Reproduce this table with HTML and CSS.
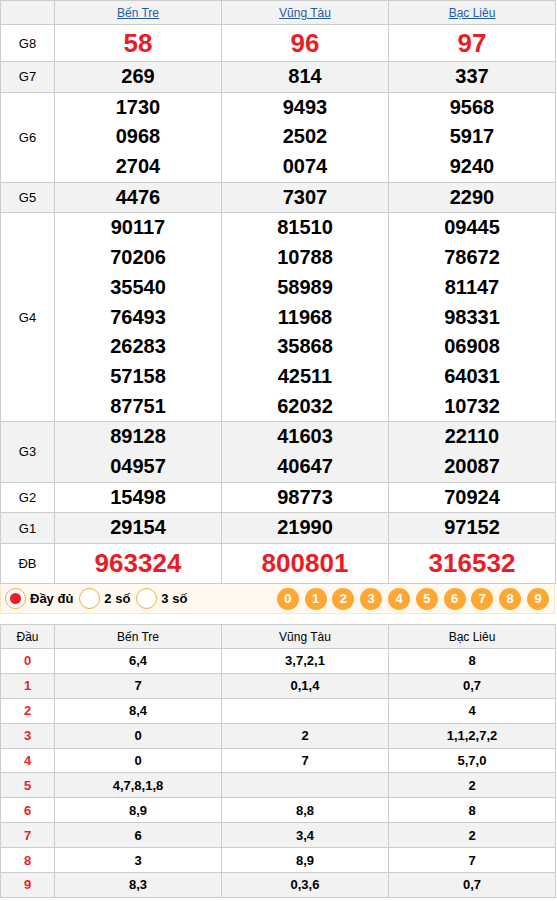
FILE: index.html
```html
<!DOCTYPE html>
<html lang="vi">
<head>
<meta charset="utf-8">
<title>XSMN</title>
<link rel="stylesheet" href="styles.css">
</head>
<body>
<table class="kq">
  <colgroup><col class="c-lbl"><col class="c-p"><col class="c-p"><col class="c-p"></colgroup>
  <tr class="hdr gray">
    <th></th>
    <th><a href="#">Bến Tre</a></th>
    <th><a href="#">Vũng Tàu</a></th>
    <th><a href="#">Bạc Liêu</a></th>
  </tr>
  <tr class="r-g8">
    <td class="lbl">G8</td>
    <td class="big red">58</td><td class="big red">96</td><td class="big red">97</td>
  </tr>
  <tr class="gray">
    <td class="lbl">G7</td>
    <td class="num"><div>269</div></td><td class="num"><div>814</div></td><td class="num"><div>337</div></td>
  </tr>
  <tr>
    <td class="lbl">G6</td>
    <td class="num"><div>1730</div><div>0968</div><div>2704</div></td>
    <td class="num"><div>9493</div><div>2502</div><div>0074</div></td>
    <td class="num"><div>9568</div><div>5917</div><div>9240</div></td>
  </tr>
  <tr class="gray">
    <td class="lbl">G5</td>
    <td class="num"><div>4476</div></td><td class="num"><div>7307</div></td><td class="num"><div>2290</div></td>
  </tr>
  <tr>
    <td class="lbl">G4</td>
    <td class="num"><div>90117</div><div>70206</div><div>35540</div><div>76493</div><div>26283</div><div>57158</div><div>87751</div></td>
    <td class="num"><div>81510</div><div>10788</div><div>58989</div><div>11968</div><div>35868</div><div>42511</div><div>62032</div></td>
    <td class="num"><div>09445</div><div>78672</div><div>81147</div><div>98331</div><div>06908</div><div>64031</div><div>10732</div></td>
  </tr>
  <tr class="gray">
    <td class="lbl">G3</td>
    <td class="num"><div>89128</div><div>04957</div></td>
    <td class="num"><div>41603</div><div>40647</div></td>
    <td class="num"><div>22110</div><div>20087</div></td>
  </tr>
  <tr>
    <td class="lbl">G2</td>
    <td class="num"><div>15498</div></td><td class="num"><div>98773</div></td><td class="num"><div>70924</div></td>
  </tr>
  <tr class="gray">
    <td class="lbl">G1</td>
    <td class="num"><div>29154</div></td><td class="num"><div>21990</div></td><td class="num"><div>97152</div></td>
  </tr>
  <tr class="r-db">
    <td class="lbl">ĐB</td>
    <td class="big red">963324</td><td class="big red">800801</td><td class="big red">316532</td>
  </tr>
</table>

<div class="ctrl">
  <div class="radios">
    <label class="radio"><span class="dot on"></span>Đầy đủ</label>
    <label class="radio"><span class="dot"></span>2 số</label>
    <label class="radio"><span class="dot"></span>3 số</label>
  </div>
  <div class="balls">
    <span class="ball">0</span><span class="ball">1</span><span class="ball">2</span><span class="ball">3</span><span class="ball">4</span><span class="ball">5</span><span class="ball">6</span><span class="ball">7</span><span class="ball">8</span><span class="ball">9</span>
  </div>
</div>

<table class="lt">
  <colgroup><col class="c-lbl"><col class="c-p"><col class="c-p"><col class="c-p"></colgroup>
  <tr class="gray lth"><th>Đầu</th><th>Bến Tre</th><th>Vũng Tàu</th><th>Bạc Liêu</th></tr>
  <tr><td class="d">0</td><td>6,4</td><td>3,7,2,1</td><td>8</td></tr>
  <tr class="gray"><td class="d">1</td><td>7</td><td>0,1,4</td><td>0,7</td></tr>
  <tr><td class="d">2</td><td>8,4</td><td></td><td>4</td></tr>
  <tr class="gray"><td class="d">3</td><td>0</td><td>2</td><td>1,1,2,7,2</td></tr>
  <tr><td class="d">4</td><td>0</td><td>7</td><td>5,7,0</td></tr>
  <tr class="gray"><td class="d">5</td><td>4,7,8,1,8</td><td></td><td>2</td></tr>
  <tr><td class="d">6</td><td>8,9</td><td>8,8</td><td>8</td></tr>
  <tr class="gray"><td class="d">7</td><td>6</td><td>3,4</td><td>2</td></tr>
  <tr><td class="d">8</td><td>3</td><td>8,9</td><td>7</td></tr>
  <tr class="gray"><td class="d">9</td><td>8,3</td><td>0,3,6</td><td>0,7</td></tr>
</table>
</body>
</html>
```

FILE: styles.css
```css
html, body {
  margin: 0;
  padding: 0;
  background: #fff;
  font-family: "Liberation Sans", Arial, sans-serif;
  color: #000;
}

table {
  border-collapse: collapse;
  table-layout: fixed;
  width: 555px;
}

.c-lbl { width: 54px; }
.c-p { width: 167px; }

td, th {
  border: 1px solid #cccccc;
  padding: 0;
  text-align: center;
  vertical-align: middle;
}

.gray td, .gray th { background: #f2f2f2; }

.kq .hdr th {
  height: 23px;
  font-size: 12px;
  font-weight: normal;
}
.kq .hdr a {
  color: #1f5ca6;
  text-decoration: underline;
}

.lbl {
  font-size: 13px;
}

.num {
  font-size: 20px;
  font-weight: bold;
}
.num div {
  height: 29.7px;
  line-height: 29.7px;
}

.big {
  font-size: 26px;
  font-weight: bold;
}
.r-g8 td { height: 36px; }
.r-db td { height: 39px; }
.red { color: #ec1c27; }

.ctrl {
  display: flex;
  align-items: center;
  justify-content: space-between;
  height: 29px;
  width: 553px;
  background: #fff9f0;
  border: 1px solid #fde6c8;
  border-top: none;
}

.radios {
  display: flex;
  align-items: center;
  padding-left: 4px;
}
.radio {
  display: flex;
  align-items: center;
  font-size: 13px;
  font-weight: bold;
  margin-right: 6px;
}
.dot {
  box-sizing: border-box;
  width: 21px;
  height: 21px;
  border-radius: 50%;
  border: 1px solid #f5a93e;
  background: #fff;
  margin-right: 4px;
  position: relative;
}
.dot.on::after {
  content: "";
  position: absolute;
  left: 4px;
  top: 4px;
  width: 11px;
  height: 11px;
  border-radius: 50%;
  background: #ec1c27;
}

.balls {
  display: flex;
  gap: 5.8px;
  padding-right: 5px;
}
.ball {
  width: 22px;
  height: 22px;
  border-radius: 50%;
  background: #ffa733;
  color: #fff;
  font-size: 13px;
  font-weight: bold;
  display: flex;
  align-items: center;
  justify-content: center;
}

.lt {
  margin-top: 10px;
}
.lt th {
  height: 23px;
  font-size: 12px;
  font-weight: normal;
}
.lt td {
  height: 23.9px;
  font-size: 13px;
  font-weight: bold;
}
.lt td.d { color: #ec1c27; }
```
